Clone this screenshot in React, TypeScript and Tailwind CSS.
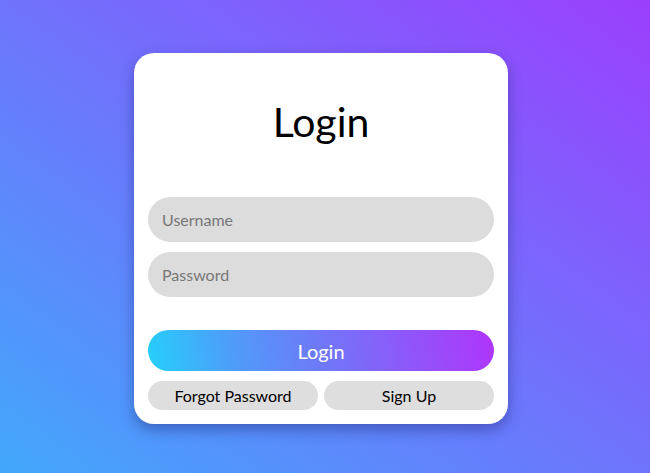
import React from 'react';

const App: React.FC = () => {
  return (
    <div className="flex h-[473px] w-full items-start justify-center bg-[linear-gradient(to_top_right,#42a8fb,#9b3ffd)] pt-[53px] pr-[8px] font-['Lato',sans-serif]">
      <div className="flex h-[371px] w-[374px] flex-col rounded-[20px] bg-white px-[14px] pb-[14px] shadow-[0_6px_14px_rgba(30,40,120,0.45)]">
        <h1 className="mt-[45px] text-center text-[41px] leading-[48px] font-normal text-black">Login</h1>
        <div className="mt-[51px] flex flex-col gap-[10px]">
          <input
            type="text"
            placeholder="Username"
            className="h-[45px] w-full rounded-full bg-[#dcdcdc] px-[14px] text-[16px] text-black outline-none placeholder:text-[#777]"
          />
          <input
            type="password"
            placeholder="Password"
            className="h-[45px] w-full rounded-full bg-[#dcdcdc] px-[14px] text-[16px] text-black outline-none placeholder:text-[#777]"
          />
        </div>
        <button className="mt-[33px] h-[41px] w-full rounded-full bg-[linear-gradient(78deg,#25d0fb,#4f9cf9_25%,#6f78f8_50%,#b034fb)] text-[20px] text-white">
          Login
        </button>
        <div className="mt-[10px] flex gap-[6px]">
          <button className="h-[29px] flex-1 rounded-full bg-[#dedede] text-[16px] text-black">Forgot Password</button>
          <button className="h-[29px] flex-1 rounded-full bg-[#dedede] text-[16px] text-black">Sign Up</button>
        </div>
      </div>
    </div>
  );
};

export default App;
